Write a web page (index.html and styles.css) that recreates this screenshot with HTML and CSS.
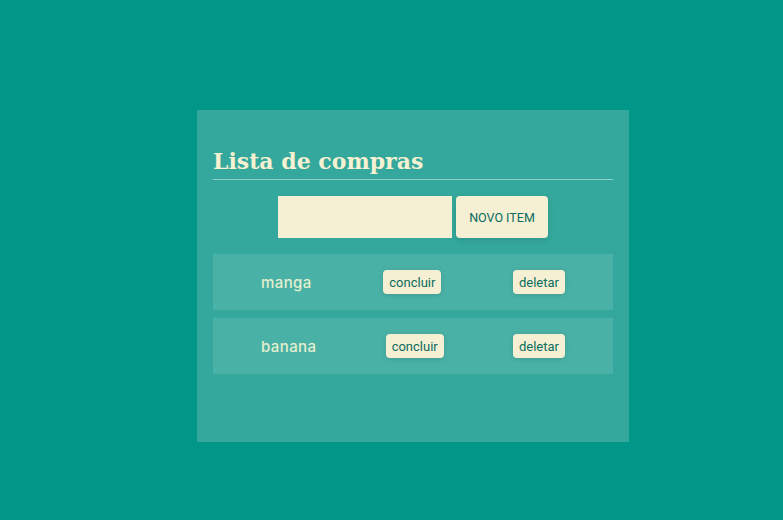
FILE: index.html
```html
<!DOCTYPE html>
<html lang="pt-BR">
<head>
<meta charset="utf-8">
<title>Lista de compras</title>
<link rel="stylesheet" href="styles.css">
</head>
<body>
<main class="card">
  <h1 class="title">Lista de compras</h1>
  <form class="add-form">
    <input class="add-input" type="text" aria-label="Novo item">
    <button class="add-btn" type="button">NOVO ITEM</button>
  </form>
  <ul class="list">
    <li class="item">
      <span class="item-name">manga</span>
      <button class="item-btn" type="button">concluir</button>
      <button class="item-btn" type="button">deletar</button>
    </li>
    <li class="item">
      <span class="item-name">banana</span>
      <button class="item-btn" type="button">concluir</button>
      <button class="item-btn" type="button">deletar</button>
    </li>
  </ul>
</main>
</body>
</html>
```
FILE: styles.css
```css
* { box-sizing: border-box; }
html, body { margin: 0; padding: 0; }
body {
  background: #009688;
  min-height: 520px;
  font-family: Roboto, "Liberation Sans", sans-serif;
  overflow: hidden;
}
.card {
  width: 432px;
  height: 332px;
  margin: 110px 0 0 197px;
  background: #34a89c;
  padding: 16px;
}
.title {
  margin: 21px 0 0;
  padding-bottom: 4px;
  font-family: "DejaVu Serif", "Liberation Serif", serif;
  font-weight: bold;
  font-size: 22px;
  line-height: 28px;
  color: #f6f1d1;
  border-bottom: 1px solid #8fd2c9;
}
.add-form {
  display: flex;
  justify-content: center;
  gap: 4px;
  margin-top: 16px;
}
.add-input {
  width: 174px;
  height: 42px;
  border: none;
  margin: 0;
  background: #f5f0d3;
  padding: 0 8px;
}
.add-btn {
  width: 92px;
  height: 42px;
  border: none;
  border-radius: 4px;
  background: #f5f0d3;
  color: #0b6b5e;
  font-family: Roboto, "Liberation Sans", sans-serif;
  font-size: 12.5px;
  box-shadow: 0 2px 6px rgba(0,0,0,0.12);
}
.list {
  list-style: none;
  margin: 16px 0 0;
  padding: 0;
  display: flex;
  flex-direction: column;
  gap: 8px;
}
.item {
  height: 56px;
  background: #4ab1a6;
  display: flex;
  align-items: center;
  justify-content: space-between;
  padding: 0 48px;
}
.item-name {
  font-family: Inter, "Noto Sans", sans-serif;
  font-weight: 500;
  font-size: 15px;
  letter-spacing: 0.4px;
  color: #e4efcf;
}
.item-btn {
  height: 24px;
  padding: 0 6px;
  border: none;
  border-radius: 4px;
  background: #f5f0d3;
  color: #0b6b5e;
  font-family: Roboto, "Liberation Sans", sans-serif;
  font-size: 13px;
  box-shadow: 0 1px 5px rgba(0,0,0,0.12);
}
```
